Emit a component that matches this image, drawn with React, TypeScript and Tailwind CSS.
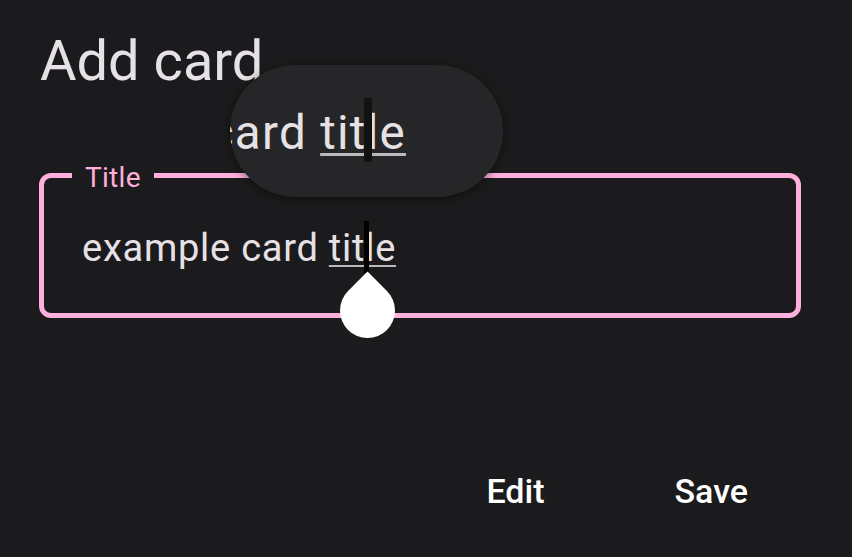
import React from 'react';

const textColor = 'text-[#e6e1e5]';

const Magnifier: React.FC = () => {
    return (
        <div className="absolute left-[230px] top-[65px] w-[273px] h-[132px] rounded-full bg-[#262628] overflow-hidden shadow-[0_2px_10px_rgba(0,0,0,0.45)]">
            <span className={`absolute right-[97px] top-[45px] whitespace-nowrap text-[47.5px] leading-none tracking-[1.3px] ${textColor}`}>
                example card <span className="underline decoration-[3px] underline-offset-[4px] decoration-[#bdb8bc]">title</span>
            </span>
            {/* magnified caret */}
            <div className="absolute left-[134px] top-[33px] w-[8px] h-[64px] bg-[#121212]" />
        </div>
    );
};

const App: React.FC = () => {
    return (
        <div className="relative w-[852px] h-[557px] bg-[#1b1b1d] font-['Roboto',sans-serif] overflow-hidden">
            <div className="flex flex-col px-[39px] pt-[33px]">
                <h1 className={`text-[56px] leading-none ${textColor} ml-[1px]`}>Add card</h1>

                <div className="relative mt-[84px] w-[762px] h-[145px] rounded-[12px] border-[5px] border-[#ffafdc] flex items-center pl-[38px] pt-[6px]">
                    <span className="absolute left-[28px] -top-[14px] px-[13px] bg-[#1b1b1d] text-[28px] leading-none tracking-[0.3px] text-[#ffafdc]">
                        Title
                    </span>
                    <span className={`text-[38px] leading-[1.5] tracking-[0.75px] ${textColor}`}>
                        example card <span className="underline decoration-[2px] underline-offset-[4px] decoration-[#bdb8bc]">title</span>
                    </span>
                </div>

                <div className="flex justify-end gap-[130px] pr-[65px] mt-[156px]">
                    <button className="text-[34px] leading-none font-medium text-white">Edit</button>
                    <button className="text-[34px] leading-none font-medium text-white">Save</button>
                </div>
            </div>

            {/* text caret */}
            <div className="absolute left-[364px] top-[221px] w-[5px] h-[52px] bg-black" />
            {/* selection handle */}
            <div className="absolute left-[340px] top-[283px] w-[55px] h-[55px] bg-white rounded-full rounded-tl-none rotate-45" />

            <Magnifier />
        </div>
    );
};

export default App;
